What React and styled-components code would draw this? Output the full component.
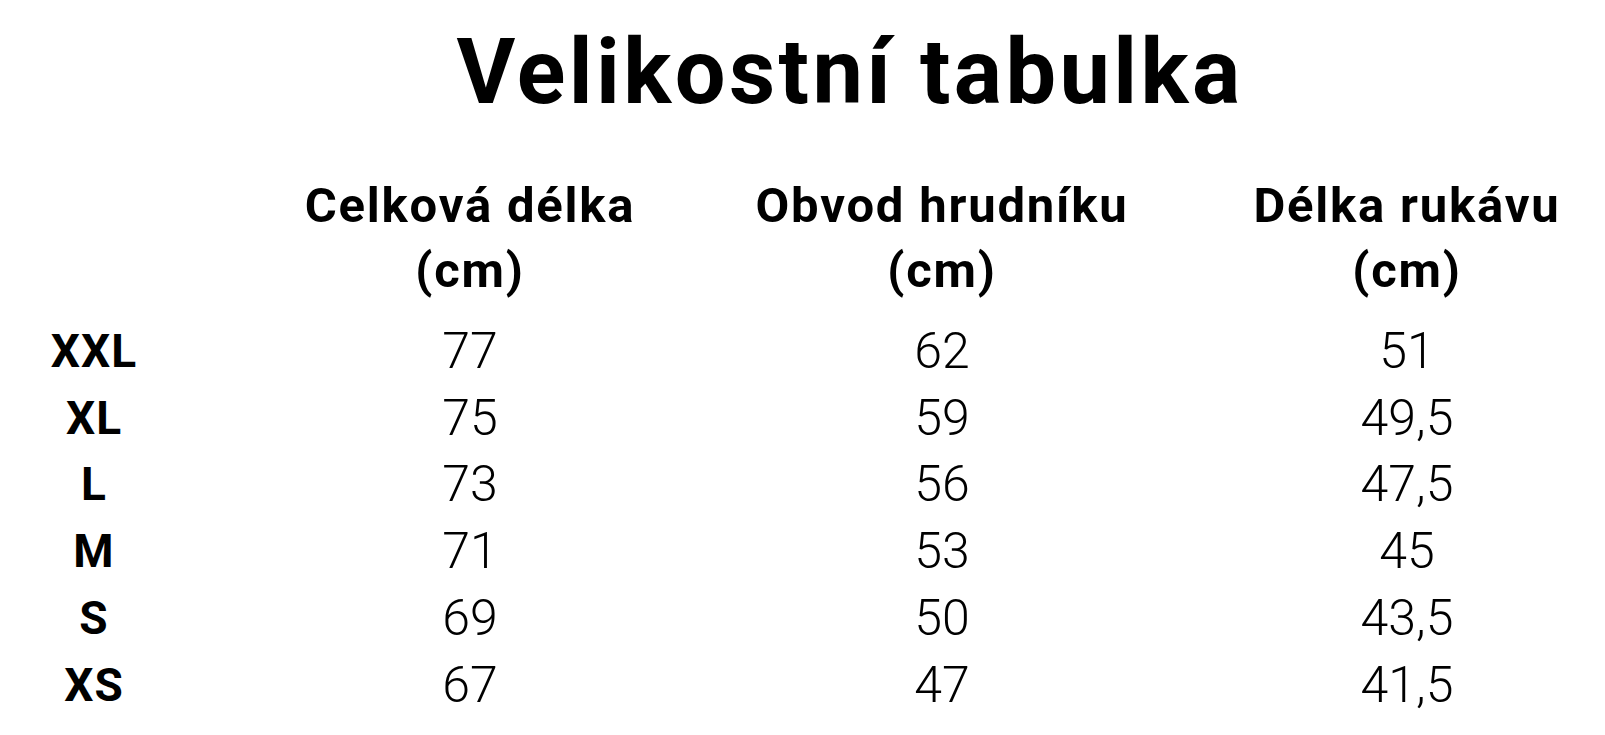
import React from 'react';
import styled, { createGlobalStyle } from 'styled-components';

const Global = createGlobalStyle`
  html, body {
    margin: 0;
    padding: 0;
    background: #fff;
    overflow: hidden;
  }
  body {
    font-family: Roboto, "Liberation Sans", sans-serif;
    color: #000;
  }
`;

const Page = styled.div`
  width: 1605px;
  height: 735px;
  padding-top: 28px;
  box-sizing: border-box;
`;

const Title = styled.h1`
  margin: 0 0 56px;
  padding-left: 95px;
  text-align: center;
  font-size: 90px;
  line-height: 90px;
  font-weight: 700;
  letter-spacing: 3.4px;
`;

const Table = styled.div`
  display: grid;
  grid-template-columns: 188px 564px 380px 550px;
`;

const Head = styled.div`
  text-align: center;
  font-size: 49px;
  line-height: 64.5px;
  font-weight: 700;
  letter-spacing: 1.8px;
  margin-bottom: 15px;
`;

const Cell = styled.div`
  text-align: center;
  line-height: 66.7px;
  font-weight: ${p => (p.$size ? 700 : 300)};
  font-size: ${p => (p.$size ? '46px' : '50px')};
  letter-spacing: ${p => (p.$size ? '1px' : '0')};
`;

const rows = [
  ['XXL', '77', '62', '51'],
  ['XL', '75', '59', '49,5'],
  ['L', '73', '56', '47,5'],
  ['M', '71', '53', '45'],
  ['S', '69', '50', '43,5'],
  ['XS', '67', '47', '41,5'],
];

const heads = ['Celková délka', 'Obvod hrudníku', 'Délka rukávu'];

export default function App() {
  return (
    <Page>
      <Global />
      <Title>Velikostní tabulka</Title>
      <Table>
        <Head />
        {heads.map(h => (
          <Head key={h}>
            {h}
            <br />
            (cm)
          </Head>
        ))}
        {rows.map(r =>
          r.map((v, i) => (
            <Cell key={r[0] + i} $size={i === 0}>
              {v}
            </Cell>
          ))
        )}
      </Table>
    </Page>
  );
}
